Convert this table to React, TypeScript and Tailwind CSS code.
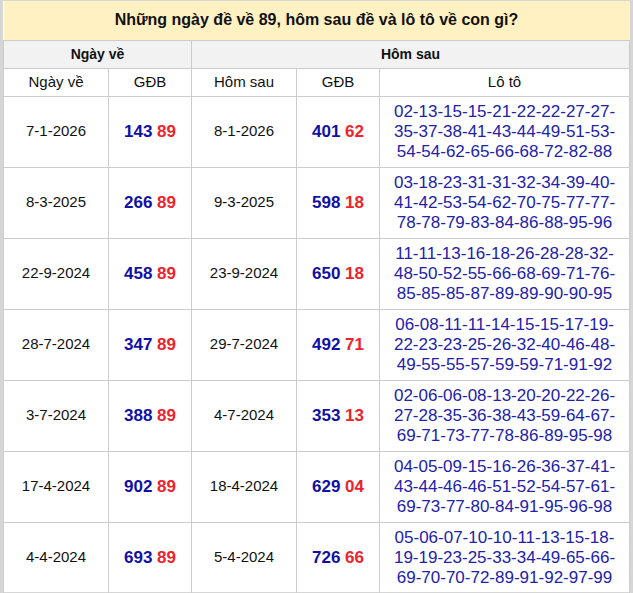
const rows = [
  { day: '7-1-2026', gdb: '143', next: '8-1-2026', nextGdb: '401', tail: '62', loto: ['02-13-15-15-21-22-22-27-27-', '35-37-38-41-43-44-49-51-53-', '54-54-62-65-66-68-72-82-88'] },
  { day: '8-3-2025', gdb: '266', next: '9-3-2025', nextGdb: '598', tail: '18', loto: ['03-18-23-31-31-32-34-39-40-', '41-42-53-54-62-70-75-77-77-', '78-78-79-83-84-86-88-95-96'] },
  { day: '22-9-2024', gdb: '458', next: '23-9-2024', nextGdb: '650', tail: '18', loto: ['11-11-13-16-18-26-28-28-32-', '48-50-52-55-66-68-69-71-76-', '85-85-85-87-89-89-90-90-95'] },
  { day: '28-7-2024', gdb: '347', next: '29-7-2024', nextGdb: '492', tail: '71', loto: ['06-08-11-11-14-15-15-17-19-', '22-23-23-25-26-32-40-46-48-', '49-55-55-57-59-59-71-91-92'] },
  { day: '3-7-2024', gdb: '388', next: '4-7-2024', nextGdb: '353', tail: '13', loto: ['02-06-06-08-13-20-20-22-26-', '27-28-35-36-38-43-59-64-67-', '69-71-73-77-78-86-89-95-98'] },
  { day: '17-4-2024', gdb: '902', next: '18-4-2024', nextGdb: '629', tail: '04', loto: ['04-05-09-15-16-26-36-37-41-', '43-44-46-46-51-52-54-57-61-', '69-73-77-80-84-91-95-96-98'] },
  { day: '4-4-2024', gdb: '693', next: '5-4-2024', nextGdb: '726', tail: '66', loto: ['05-06-07-10-10-11-13-15-18-', '19-19-23-25-33-34-49-65-66-', '69-70-70-72-89-91-92-97-99'] },
]

const cell = 'border border-[#cccccc] text-center align-middle'

export default function App() {
  return (
    <div className="w-[633px] h-[593px] bg-white border-x-[3px] border-t border-b border-[#d6d6d6] font-['Liberation_Sans',Arial,sans-serif] text-[#111]">
      <table className="w-full border-collapse table-fixed">
        <colgroup>
          <col className="w-[105px]" />
          <col className="w-[83px]" />
          <col className="w-[105px]" />
          <col className="w-[83px]" />
          <col />
        </colgroup>
        <thead>
          <tr>
            <th colSpan={5} className="h-[39px] bg-[#fff1c2] text-[16px] font-bold text-center border-b border-[#cccccc]">
              Những ngày đề về 89, hôm sau đề và lô tô về con gì?
            </th>
          </tr>
          <tr className="bg-[#f2f2f2]">
            <th colSpan={2} className={`${cell} h-[28px] text-[14px] font-bold`}>Ngày về</th>
            <th colSpan={3} className={`${cell} h-[28px] text-[14px] font-bold`}>Hôm sau</th>
          </tr>
          <tr>
            <th className={`${cell} h-[28px] text-[15px] font-normal`}>Ngày về</th>
            <th className={`${cell} h-[28px] text-[15px] font-normal`}>GĐB</th>
            <th className={`${cell} h-[28px] text-[15px] font-normal`}>Hôm sau</th>
            <th className={`${cell} h-[28px] text-[15px] font-normal`}>GĐB</th>
            <th className={`${cell} h-[28px] text-[15px] font-normal`}>Lô tô</th>
          </tr>
        </thead>
        <tbody>
          {rows.map((r) => (
            <tr key={r.day} className="h-[71px]">
              <td className={`${cell} text-[15px]`}>{r.day}</td>
              <td className={`${cell} text-[17px] font-bold`}>
                <span className="text-[#1010a6]">{r.gdb}</span> <span className="text-[#f0222b]">89</span>
              </td>
              <td className={`${cell} text-[15px]`}>{r.next}</td>
              <td className={`${cell} text-[17px] font-bold`}>
                <span className="text-[#1010a6]">{r.nextGdb}</span> <span className="text-[#f0222b]">{r.tail}</span>
              </td>
              <td className={`${cell} text-[17px] leading-[20px] text-[#2222a8]`}>
                {r.loto.map((line) => (
                  <div key={line}>{line}</div>
                ))}
              </td>
            </tr>
          ))}
        </tbody>
      </table>
    </div>
  )
}
